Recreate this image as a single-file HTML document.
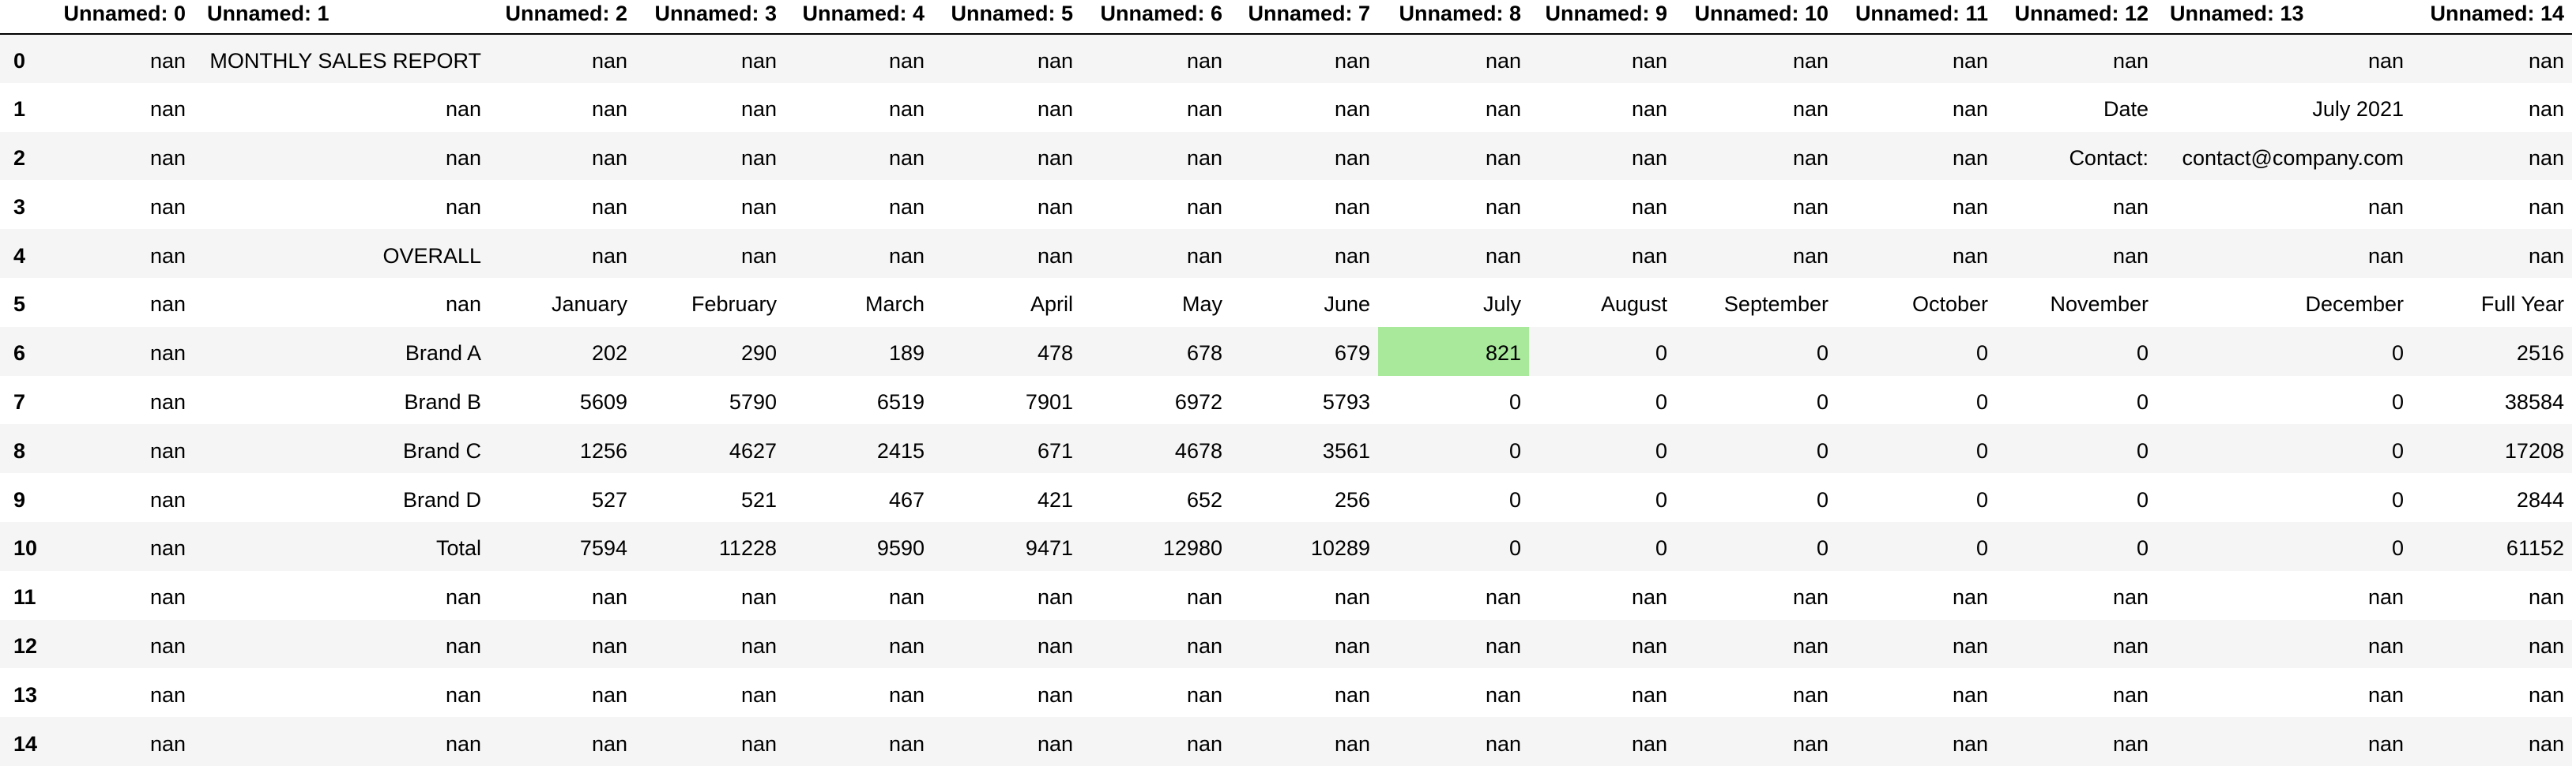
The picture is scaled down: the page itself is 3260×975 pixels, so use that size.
<!DOCTYPE html>
<html><head><meta charset="utf-8"><style>
html,body{margin:0;padding:0;background:#fff;width:3260px;height:975px;overflow:hidden}
table{border-collapse:collapse;table-layout:fixed;width:3255px;font-family:"Liberation Sans",Arial,sans-serif;font-size:27px;color:#000}
th,td{padding:0 10px;text-align:right;white-space:nowrap;overflow:visible}
thead tr{height:43px}
thead th{height:43px;line-height:30px;vertical-align:top;font-weight:bold;border-bottom:2px solid #000;padding-top:2px;box-sizing:border-box}
thead th.l{text-align:left;padding-left:17px}
tbody tr{height:61.8px}
tbody td,tbody th{padding-top:5px;line-height:30px}
tbody tr:nth-child(odd){background:#f5f5f5}
tbody th{text-align:left;padding-left:17px;font-weight:bold}
td.g{background:#a8e99b}
</style></head><body>
<table>
<colgroup><col style="width:65px"><col style="width:180px"><col style="width:374px"><col style="width:185px"><col style="width:189px"><col style="width:187px"><col style="width:188px"><col style="width:189px"><col style="width:187px"><col style="width:191px"><col style="width:185px"><col style="width:204px"><col style="width:202px"><col style="width:203px"><col style="width:323px"><col style="width:203px"></colgroup>
<thead><tr><th></th><th>Unnamed: 0</th><th class="l">Unnamed: 1</th><th>Unnamed: 2</th><th>Unnamed: 3</th><th>Unnamed: 4</th><th>Unnamed: 5</th><th>Unnamed: 6</th><th>Unnamed: 7</th><th>Unnamed: 8</th><th>Unnamed: 9</th><th>Unnamed: 10</th><th>Unnamed: 11</th><th>Unnamed: 12</th><th class="l">Unnamed: 13</th><th>Unnamed: 14</th></tr></thead>
<tbody>
<tr><th>0</th><td>nan</td><td>MONTHLY SALES REPORT</td><td>nan</td><td>nan</td><td>nan</td><td>nan</td><td>nan</td><td>nan</td><td>nan</td><td>nan</td><td>nan</td><td>nan</td><td>nan</td><td>nan</td><td>nan</td></tr>
<tr><th>1</th><td>nan</td><td>nan</td><td>nan</td><td>nan</td><td>nan</td><td>nan</td><td>nan</td><td>nan</td><td>nan</td><td>nan</td><td>nan</td><td>nan</td><td>Date</td><td>July 2021</td><td>nan</td></tr>
<tr><th>2</th><td>nan</td><td>nan</td><td>nan</td><td>nan</td><td>nan</td><td>nan</td><td>nan</td><td>nan</td><td>nan</td><td>nan</td><td>nan</td><td>nan</td><td>Contact:</td><td>contact@company.com</td><td>nan</td></tr>
<tr><th>3</th><td>nan</td><td>nan</td><td>nan</td><td>nan</td><td>nan</td><td>nan</td><td>nan</td><td>nan</td><td>nan</td><td>nan</td><td>nan</td><td>nan</td><td>nan</td><td>nan</td><td>nan</td></tr>
<tr><th>4</th><td>nan</td><td>OVERALL</td><td>nan</td><td>nan</td><td>nan</td><td>nan</td><td>nan</td><td>nan</td><td>nan</td><td>nan</td><td>nan</td><td>nan</td><td>nan</td><td>nan</td><td>nan</td></tr>
<tr><th>5</th><td>nan</td><td>nan</td><td>January</td><td>February</td><td>March</td><td>April</td><td>May</td><td>June</td><td>July</td><td>August</td><td>September</td><td>October</td><td>November</td><td>December</td><td>Full Year</td></tr>
<tr><th>6</th><td>nan</td><td>Brand A</td><td>202</td><td>290</td><td>189</td><td>478</td><td>678</td><td>679</td><td class="g">821</td><td>0</td><td>0</td><td>0</td><td>0</td><td>0</td><td>2516</td></tr>
<tr><th>7</th><td>nan</td><td>Brand B</td><td>5609</td><td>5790</td><td>6519</td><td>7901</td><td>6972</td><td>5793</td><td>0</td><td>0</td><td>0</td><td>0</td><td>0</td><td>0</td><td>38584</td></tr>
<tr><th>8</th><td>nan</td><td>Brand C</td><td>1256</td><td>4627</td><td>2415</td><td>671</td><td>4678</td><td>3561</td><td>0</td><td>0</td><td>0</td><td>0</td><td>0</td><td>0</td><td>17208</td></tr>
<tr><th>9</th><td>nan</td><td>Brand D</td><td>527</td><td>521</td><td>467</td><td>421</td><td>652</td><td>256</td><td>0</td><td>0</td><td>0</td><td>0</td><td>0</td><td>0</td><td>2844</td></tr>
<tr><th>10</th><td>nan</td><td>Total</td><td>7594</td><td>11228</td><td>9590</td><td>9471</td><td>12980</td><td>10289</td><td>0</td><td>0</td><td>0</td><td>0</td><td>0</td><td>0</td><td>61152</td></tr>
<tr><th>11</th><td>nan</td><td>nan</td><td>nan</td><td>nan</td><td>nan</td><td>nan</td><td>nan</td><td>nan</td><td>nan</td><td>nan</td><td>nan</td><td>nan</td><td>nan</td><td>nan</td><td>nan</td></tr>
<tr><th>12</th><td>nan</td><td>nan</td><td>nan</td><td>nan</td><td>nan</td><td>nan</td><td>nan</td><td>nan</td><td>nan</td><td>nan</td><td>nan</td><td>nan</td><td>nan</td><td>nan</td><td>nan</td></tr>
<tr><th>13</th><td>nan</td><td>nan</td><td>nan</td><td>nan</td><td>nan</td><td>nan</td><td>nan</td><td>nan</td><td>nan</td><td>nan</td><td>nan</td><td>nan</td><td>nan</td><td>nan</td><td>nan</td></tr>
<tr><th>14</th><td>nan</td><td>nan</td><td>nan</td><td>nan</td><td>nan</td><td>nan</td><td>nan</td><td>nan</td><td>nan</td><td>nan</td><td>nan</td><td>nan</td><td>nan</td><td>nan</td><td>nan</td></tr>
</tbody></table>
</body></html>
